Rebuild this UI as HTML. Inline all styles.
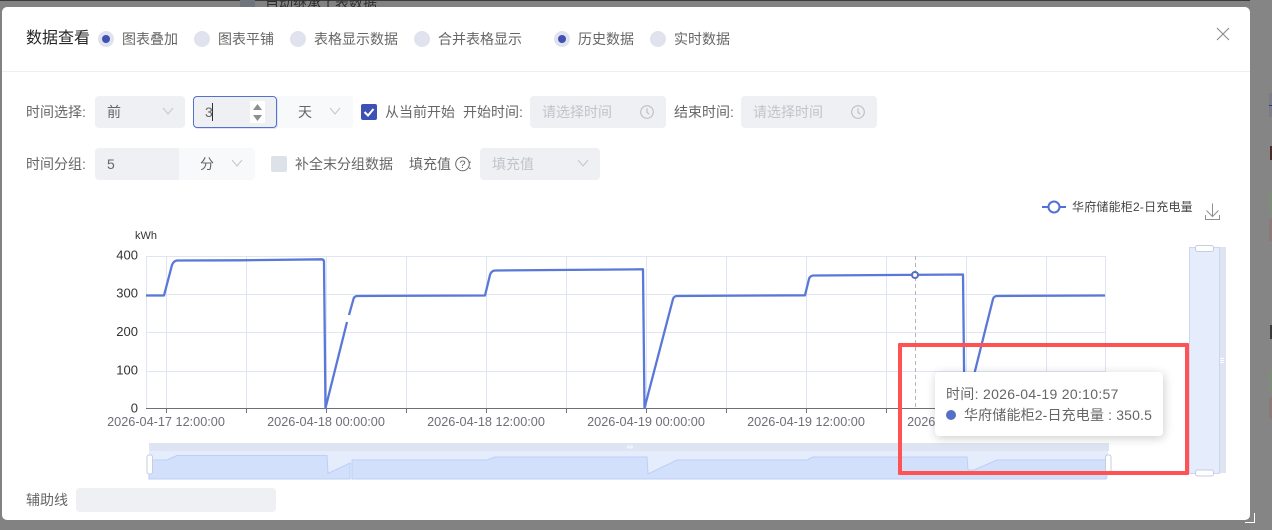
<!DOCTYPE html>
<html lang="zh"><head><meta charset="utf-8"><title>数据查看</title>
<style>
html,body{margin:0;padding:0;width:1272px;height:530px;overflow:hidden;background:#828282}
body{font-family:"Liberation Sans","Noto Sans CJK SC",sans-serif;position:relative;font-size:14px;color:#666}
.a{position:absolute;white-space:nowrap}
.t{position:absolute;white-space:nowrap;line-height:20px;height:20px}
.r{position:absolute;width:16px;height:16px;border-radius:50%;background:#e0e3ed;top:31px}
.r.on:after{content:"";position:absolute;left:4px;top:4px;width:8px;height:8px;border-radius:50%;background:#3f51b5}
.b{position:absolute;background:#eff0f3;border-radius:4px}
.l{position:absolute;background:#f8f9fa;border-radius:0 4px 4px 0}
svg{position:absolute;overflow:visible}
</style></head><body>
<div class="a" style="left:0;top:0;width:1272px;height:1px;background:#3c3c3c"></div>
<div class="a" style="left:240px;top:0;width:15px;height:7px;background:#70747c"></div>
<div class="a" style="left:265px;top:-7px;font-size:14px;line-height:20px;color:#2e2e2e">自动继承了表数据</div>
<div class="a" style="left:1250px;top:0;width:22px;height:530px;background:#858585"></div>
<div class="a" style="left:1269px;top:93px;width:3px;height:24px;background:#7b7c88"></div>
<div class="a" style="left:1269px;top:105px;width:3px;height:1px;background:#2c3a80"></div>
<div class="a" style="left:1270px;top:146px;width:2px;height:14px;background:#4a2c2c"></div>
<div class="a" style="left:1269px;top:192px;width:3px;height:22px;background:#7f8c7a"></div>
<div class="a" style="left:1269px;top:219px;width:3px;height:22px;background:#8c7a7a"></div>
<div class="a" style="left:1270px;top:325px;width:2px;height:14px;background:#3a3a3a"></div>
<div class="a" style="left:1269px;top:370px;width:3px;height:22px;background:#7f8c7a"></div>
<div class="a" style="left:1269px;top:397px;width:3px;height:22px;background:#8c7a7a"></div>

<div class="a" style="left:2px;top:7px;width:1248px;height:513px;background:#fff;border-radius:5px"></div>
<div class="a" style="left:2px;top:71px;width:1248px;height:1px;background:#eceef1"></div>

<div class="t" style="left:26px;top:29px;font-size:16px;color:#262626">数据查看</div>
<div class="r on" style="left:98px"></div><div class="t" style="left:122px;top:29px">图表叠加</div>
<div class="r" style="left:194px"></div><div class="t" style="left:218px;top:29px">图表平铺</div>
<div class="r" style="left:290px"></div><div class="t" style="left:314px;top:29px">表格显示数据</div>
<div class="r" style="left:414px"></div><div class="t" style="left:438px;top:29px">合并表格显示</div>
<div class="r on" style="left:554px"></div><div class="t" style="left:578px;top:29px">历史数据</div>
<div class="r" style="left:650px"></div><div class="t" style="left:674px;top:29px">实时数据</div>
<svg style="left:1216px;top:27px" width="14" height="14" viewBox="0 0 14 14"><path d="M1 1L13 13M13 1L1 13" stroke="#8a8a8a" stroke-width="1.1" fill="none"/></svg>

<div class="t" style="left:26px;top:102px">时间选择:</div>
<div class="b" style="left:95px;top:96px;width:90px;height:32px"></div>
<div class="t" style="left:107px;top:102px">前</div>
<svg style="left:162px;top:107px" width="12" height="8"><path d="M1 1L6 7L11 1" stroke="#c4c6cc" fill="none"/></svg>
<div class="l" style="left:277px;top:96px;width:76px;height:32px"></div>
<div class="a" style="left:193px;top:96px;width:82px;height:30px;background:#eff0f3;border:1px solid #5470d0;border-radius:4px;box-shadow:1px 1px 0 #dfe4f6"></div>
<div class="t" style="left:205px;top:102px">3</div>
<div class="a" style="left:212px;top:103px;width:1px;height:18px;background:#333"></div>
<div class="a" style="left:250px;top:101px;width:15px;height:22px;background:#fff"></div>
<svg style="left:250px;top:101px" width="15" height="22"><path d="M3 9L7.5 3L12 9Z M3 14L12 14L7.5 20Z" fill="#8e8e8e"/></svg>
<div class="t" style="left:298px;top:102px">天</div>
<svg style="left:329px;top:107px" width="12" height="8"><path d="M1 1L6 7L11 1" stroke="#c4c6cc" fill="none"/></svg>
<div class="a" style="left:361px;top:104px;width:16px;height:16px;background:#3f51b5;border-radius:2px"></div>
<svg style="left:361px;top:104px" width="16" height="16"><path d="M3.500 8L7 11.500L12.500 5" stroke="#fff" stroke-width="2" fill="none"/></svg>
<div class="t" style="left:385px;top:102px">从当前开始</div>
<div class="t" style="left:463px;top:102px">开始时间:</div>
<div class="b" style="left:530px;top:96px;width:136px;height:32px"></div>
<div class="t" style="left:542px;top:102px;color:#c0c4cc">请选择时间</div>
<svg style="left:640px;top:105px" width="14" height="14"><circle cx="7" cy="7" r="6.300" stroke="#b8b8b8" fill="none"/><path d="M7 3.200V7.400L9.200 9.200" stroke="#b8b8b8" fill="none"/></svg>
<div class="t" style="left:674px;top:102px">结束时间:</div>
<div class="b" style="left:741px;top:96px;width:136px;height:32px"></div>
<div class="t" style="left:753px;top:102px;color:#c0c4cc">请选择时间</div>
<svg style="left:851px;top:105px" width="14" height="14"><circle cx="7" cy="7" r="6.300" stroke="#b8b8b8" fill="none"/><path d="M7 3.200V7.400L9.200 9.200" stroke="#b8b8b8" fill="none"/></svg>

<div class="t" style="left:26px;top:154px">时间分组:</div>
<div class="l" style="left:179px;top:148px;width:76px;height:32px"></div>
<div class="b" style="left:95px;top:148px;width:84px;height:32px;border-radius:4px 0 0 4px"></div>
<div class="t" style="left:107px;top:154px">5</div>
<div class="t" style="left:200px;top:154px">分</div>
<svg style="left:231px;top:159px" width="12" height="8"><path d="M1 1L6 7L11 1" stroke="#c4c6cc" fill="none"/></svg>
<div class="a" style="left:271px;top:156px;width:16px;height:16px;background:#dde2e8;border-radius:2px"></div>
<div class="t" style="left:295px;top:154px">补全末分组数据</div>
<div class="t" style="left:409px;top:154px">填充值</div>
<svg style="left:455px;top:156px" width="16" height="16"><circle cx="7.500" cy="8" r="6.800" stroke="#666" fill="none"/><text x="7.500" y="12" font-size="11" text-anchor="middle" fill="#666" font-family="Liberation Sans">?</text></svg>
<div class="t" style="left:468px;top:154px">:</div>
<div class="b" style="left:480px;top:148px;width:120px;height:32px"></div>
<div class="t" style="left:492px;top:154px;color:#c0c4cc">填充值</div>
<svg style="left:577px;top:159px" width="12" height="8"><path d="M1 1L6 7L11 1" stroke="#c4c6cc" fill="none"/></svg>

<svg style="left:0;top:0" width="1272" height="530" viewBox="0 0 1272 530">
<g stroke="#e0e6f1" fill="none">
<path d="M146 256.500H1106M146 294.500H1106M146 332.500H1106M146 371.500H1106"/>
<path d="M146.500 256V408M166.500 256V408M246.500 256V408M326.500 256V408M406.500 256V408M486.500 256V408M566.500 256V408M646.500 256V408M726.500 256V408M806.500 256V408M886.500 256V408M966.500 256V408M1046.500 256V408M1105.500 256V408"/>
</g>
<path d="M146 408.500H1106M166.500 408V413M246.500 408V413M326.500 408V413M406.500 408V413M486.500 408V413M566.500 408V413M646.500 408V413M726.500 408V413M806.500 408V413M886.500 408V413" stroke="#6e7079" fill="none"/>
<g font-family="Liberation Sans" font-size="13" fill="#333" text-anchor="end">
<text x="138" y="259.500">400</text><text x="138" y="297.500">300</text><text x="138" y="336">200</text><text x="138" y="374.500">100</text><text x="138" y="412.500">0</text>
</g>
<text x="135" y="239" font-family="Liberation Sans" font-size="11" fill="#333">kWh</text>
<g font-family="Liberation Sans" font-size="12.700" fill="#6e7079" text-anchor="middle">
<text x="166" y="426">2026-04-17 12:00:00</text><text x="326" y="426">2026-04-18 00:00:00</text><text x="486" y="426">2026-04-18 12:00:00</text><text x="646" y="426">2026-04-19 00:00:00</text><text x="806" y="426">2026-04-19 12:00:00</text><text x="966" y="426">2026-04-19 20:00:00</text>
</g>
<path d="M915.500 256V408" stroke="#b4b4b4" stroke-dasharray="4 3" fill="none"/>
<path d="M146 295.500H164L172 265Q173.500 261 177 260.500L240 260.300L322 259.300Q324 259.500 324 262L325.500 408L347 322M349 315L353.500 299Q354 296.500 357 296L485 295.500L490 275Q491 271 495 270.500L643 269.300L644.500 408L673 299Q674 296 677 296L805 295.300L809 279Q810 275.500 814 275.500L963 274.500L964.500 408M974 375L993 299Q994 296 997 296L1105 295.500" stroke="#5a78d8" stroke-width="2.300" fill="none" stroke-linejoin="round"/>
<circle cx="915" cy="275" r="3" fill="#fff" stroke="#5470c6" stroke-width="2"/>

<path d="M1042 207H1066" stroke="#5470d8" stroke-width="2"/>
<circle cx="1054" cy="207" r="5.500" fill="#fff" stroke="#5470d8" stroke-width="2"/>
<text x="1072" y="211" font-size="12" letter-spacing=".2" fill="#444" font-family="Liberation Sans,Noto Sans CJK SC">华府储能柜2-日充电量</text>
<path d="M1212.500 203.500V216M1206.500 210.500L1212.500 216.500L1218.500 210.500M1205.500 215V219.500H1219.500V215" stroke="#8e8e8e" fill="none"/>

<rect x="149" y="443" width="960" height="8" fill="#dfe4f2"/>
<rect x="149" y="451" width="959" height="28" fill="#e5ecfc"/>
<path d="M149 479V460H167L177 455.500H327L328 473.500L350 463V479ZM352 479V460H487L495 457H647L648 474L677 460H807L813 457H967L968 470H974L997 460H1106V479Z" fill="#d2e0fb" stroke="#bccff6" stroke-width="1"/>
<path d="M628 445.500V448.500M630 445.500V448.500M632 445.500V448.500" stroke="#fff" fill="none"/>
<rect x="147" y="455" width="5.500" height="19" rx="2" fill="#fff" stroke="#c5cde0"/>
<rect x="1105.500" y="455" width="5.500" height="19" rx="2" fill="#fff" stroke="#c5cde0"/>

<rect x="1219" y="247" width="7" height="226" fill="#dfe4f2"/>
<rect x="1189.500" y="247.500" width="30" height="226" fill="#e5ecfc" stroke="#cdd6ec"/>
<rect x="1195.500" y="245.500" width="18" height="6" rx="2" fill="#fff" stroke="#c5cde0"/>
<rect x="1195.500" y="470" width="18" height="6" rx="2" fill="#fff" stroke="#c5cde0"/>
<path d="M1220 358.500H1224M1220 360.500H1224M1220 362.500H1224" stroke="#fff" fill="none"/>
</svg>

<div class="a" style="left:935px;top:372px;width:228px;height:64px;background:#fff;border-radius:4px;box-shadow:1px 2px 10px rgba(0,0,0,.2)"></div>
<div class="t" style="left:946px;top:384px;letter-spacing:.3px">时间: 2026-04-19 20:10:57</div>
<div class="a" style="left:946px;top:410px;width:10px;height:10px;border-radius:50%;background:#5470c6"></div>
<div class="t" style="left:964px;top:405px;letter-spacing:.15px">华府储能柜2-日充电量 : 350.5</div>

<div class="a" style="left:898px;top:343px;width:283px;height:124px;border:4px solid #ff5252;border-radius:1px"></div>

<div class="t" style="left:26px;top:490px">辅助线</div>
<div class="b" style="left:76px;top:488px;width:200px;height:24px"></div>

<svg style="left:1244px;top:512px" width="12" height="12"><path d="M1 10.500H10.500V1" stroke="#fff" fill="none"/></svg>
</body></html>
